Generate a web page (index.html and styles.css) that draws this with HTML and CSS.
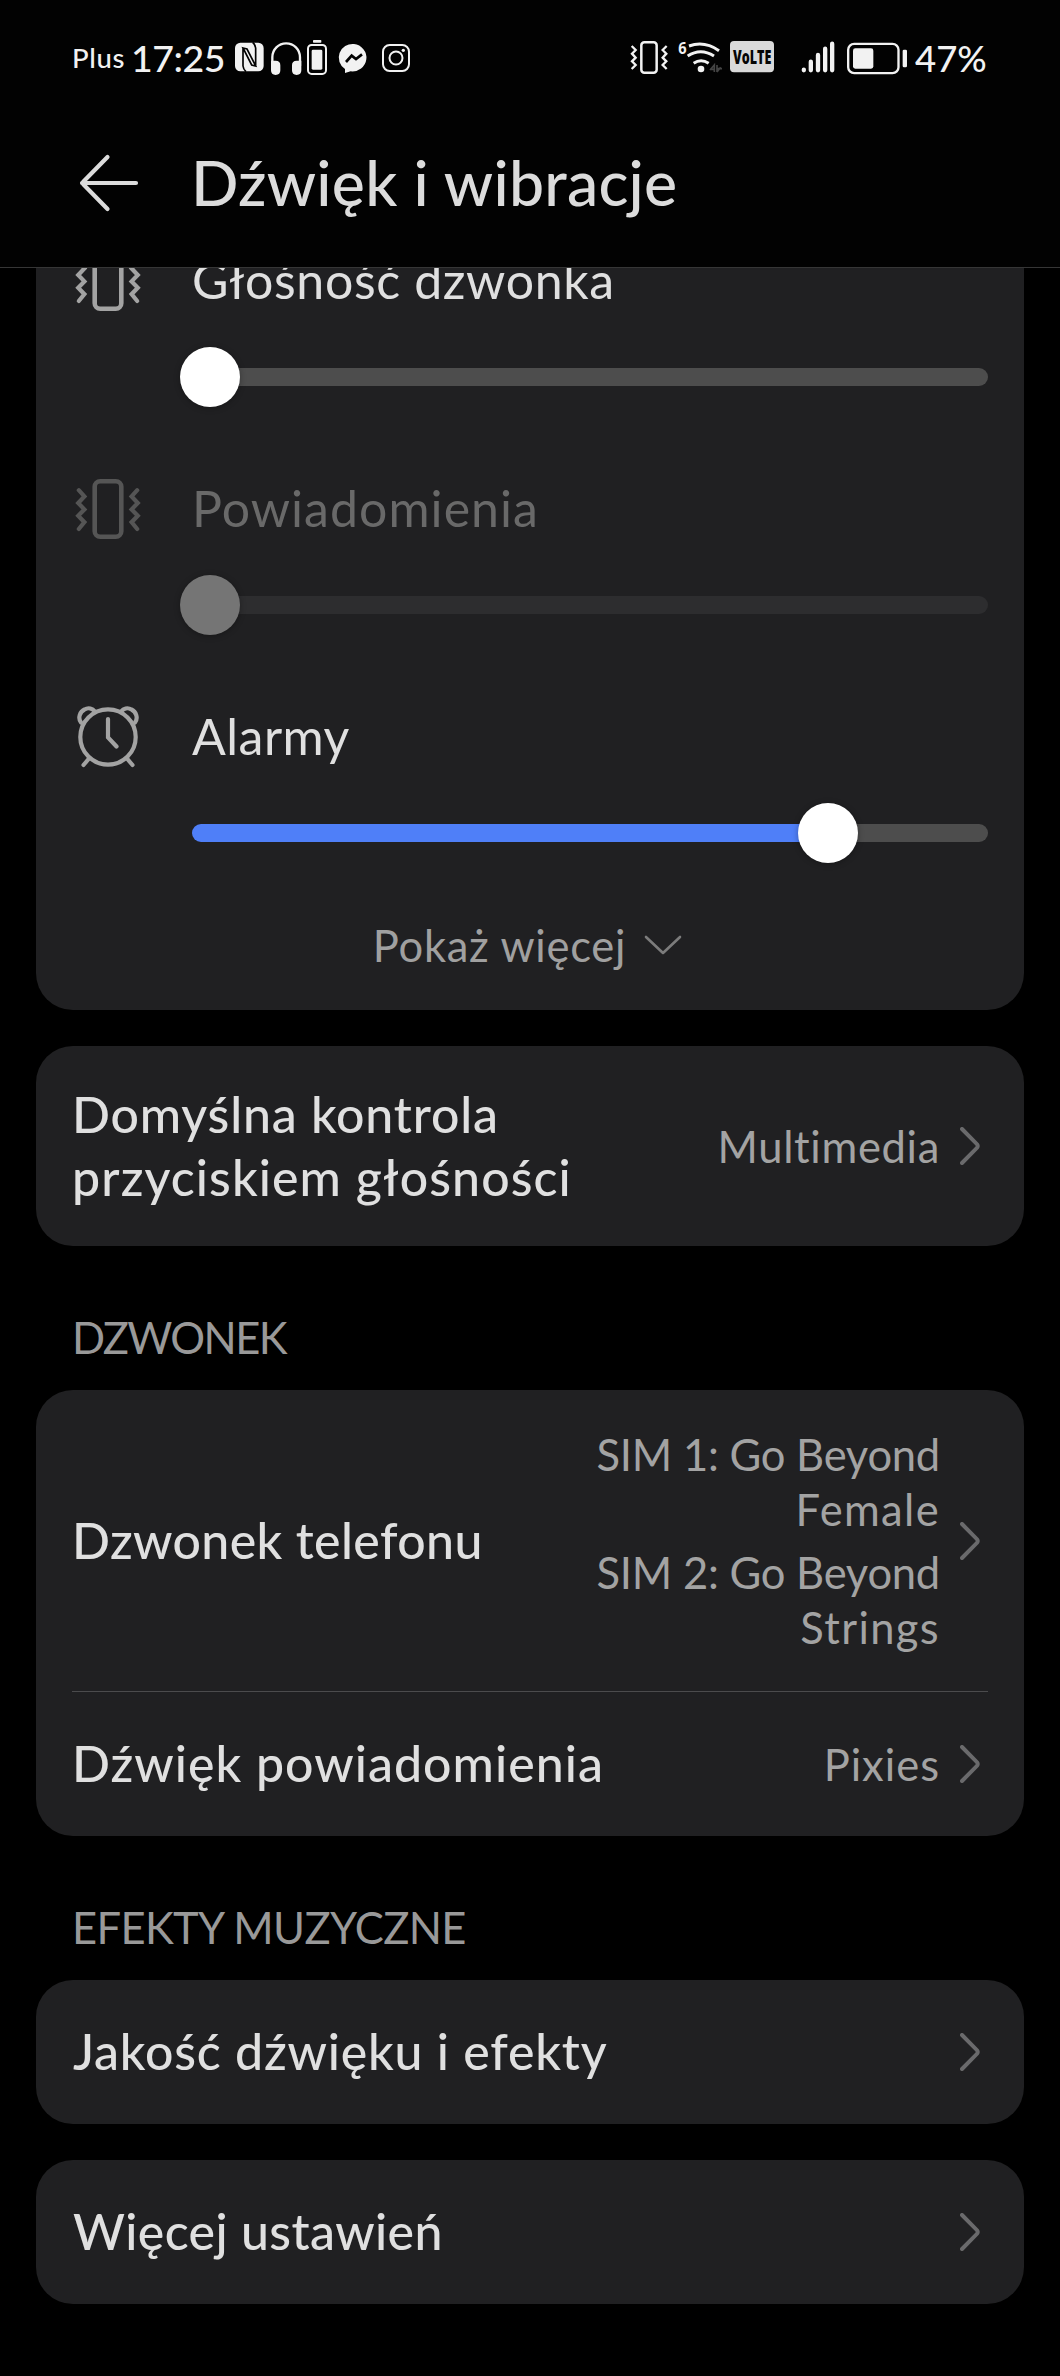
FILE: index.html
```
<!DOCTYPE html>
<html lang="pl">
<head>
<meta charset="utf-8">
<title>Dźwięk i wibracje</title>
<link rel="stylesheet" href="styles.css">
</head>
<body>
<svg width="0" height="0" class="defs">
  <defs>
    <symbol id="vibrate" viewBox="0 0 68 64">
      <g fill="none" stroke="currentColor" stroke-width="4.6" stroke-linecap="round" stroke-linejoin="round">
        <rect x="20.7" y="4.2" width="26.6" height="55.6" rx="5.5"/>
        <path stroke-linejoin="miter" stroke-width="4.2" d="M4.8 13.2 10.4 19.4 4.2 26 10.4 32.4 4.2 38.8 10.4 45.2 4.8 52M63.2 13.2 57.6 19.4 63.8 26 57.6 32.4 63.8 38.8 57.6 45.2 63.2 52"/>
      </g>
    </symbol>
    <symbol id="chevron" viewBox="0 0 20 38">
      <path d="M2 2 17 17.2Q18.4 19 17 20.8L2 36" fill="none" stroke="currentColor" stroke-width="4" stroke-linecap="round"/>
    </symbol>
  </defs>
</svg>

<header class="header">
  <div class="status">
    <span class="carrier">Plus</span>
    <span class="time">17:25</span>
    <svg class="st-nfc" viewBox="525 60 86 110">
      <rect x="525" y="68" width="86" height="86" rx="16" fill="currentColor"/>
      <path d="M549 84v54q1 10 9 17M587 138V84q-1-10-9-17M549 84l12 3 26 51-12-3z" fill="none" stroke="#020202" stroke-width="5"/>
    </svg>
    <svg class="st-phones" viewBox="632 60 91 110">
      <path d="M636 138v-26a41.500 42 0 0 1 83 0v26" fill="none" stroke="currentColor" stroke-width="7"/>
      <path fill="currentColor" d="M632 122h14q14 0 14 14v15q0 14-14 14t-14-14zM723 122h-14q-14 0-14 14v15q0 14 14 14t14-14z"/>
    </svg>
    <svg class="st-cell" viewBox="741 60 60 110">
      <rect x="759" y="60" width="25" height="8" rx="2" fill="currentColor"/>
      <rect x="744" y="75" width="54" height="87" rx="11" fill="none" stroke="currentColor" stroke-width="6"/>
      <rect x="755" y="89" width="32" height="60" rx="4" fill="currentColor"/>
    </svg>
    <svg class="st-msg" viewBox="840 60 85 110">
      <path fill="currentColor" d="M882 72a42 41 0 1 1-10 82l-17 5v-12a42 41 0 0 1 27-75z"/>
      <path d="M858 126l17-19 13 10 18-14" fill="none" stroke="#020202" stroke-width="8"/>
    </svg>
    <svg class="st-insta" viewBox="966 60 84 110">
      <g fill="none" stroke="currentColor" stroke-width="6">
        <rect x="969" y="75" width="78" height="78" rx="20"/>
        <circle cx="1008" cy="114" r="19.500"/>
      </g>
      <circle cx="1030" cy="91" r="5" fill="currentColor"/>
    </svg>

    <span class="spacer"></span>

    <svg class="st-vib" viewBox="60 60 116 110">
      <g fill="none" stroke="currentColor" stroke-width="7.500">
        <rect x="94" y="67" width="46" height="91" rx="9"/>
        <path stroke-width="7" d="M65 78l12 12-11 11 11 12-11 11 11 11-12 12M170 78l-12 12 11 11-11 12 11 11-11 11 12 12"/>
      </g>
    </svg>
    <svg class="st-wifi" viewBox="203 60 133 110">
      <text x="204" y="101" class="wifi-gen" textLength="25" lengthAdjust="spacingAndGlyphs">6</text>
      <g fill="none" stroke="currentColor" stroke-width="9">
        <path d="M236 78q46-17 90 14M232 108q39-26 79 0M250 130q22-15 45 0"/>
      </g>
      <circle cx="272" cy="147" r="10" fill="currentColor"/>
      <path d="M299 150l13-15v21M299 148h15M320 135v21M320 156l11-14M320 146h15" fill="none" stroke="#444" stroke-width="5"/>
    </svg>
    <svg class="st-volte" viewBox="360 60 132 110">
      <rect x="360" y="63" width="132" height="94" rx="12" fill="#d9d9d9"/>
      <text x="369" y="131" class="volte" textLength="115" lengthAdjust="spacingAndGlyphs">VoLTE</text>
    </svg>
    <svg class="st-signal" viewBox="573 60 101 110">
      <path d="M581.500 149v2M602.500 125v26M624 105v46M645.500 86v65M666.500 71v80" fill="none" stroke="currentColor" stroke-width="13" stroke-linecap="round"/>
    </svg>
    <svg class="st-batt" viewBox="711 60 180 110">
      <rect x="714.500" y="71.500" width="151" height="88" rx="18" fill="none" stroke="currentColor" stroke-width="7"/>
      <rect x="729" y="85" width="61" height="61" rx="7" fill="currentColor"/>
      <rect x="878" y="89" width="13" height="53" rx="4" fill="currentColor"/>
    </svg>
    <span class="percent">47%</span>
  </div>
  <div class="titlebar">
    <svg class="back" viewBox="0 0 60 60">
      <path d="M28.500 4 4.500 28.500Q3 30 4.500 31.500L28.500 56M3 30H57" fill="none" stroke="currentColor" stroke-width="4.200" stroke-linecap="round"/>
    </svg>
    <h1 class="title">Dźwięk i wibracje</h1>
  </div>
</header>

<main class="content">
  <section class="card volumes">
    <div class="volume">
      <svg class="vol-icon"><use href="#vibrate"/></svg>
      <span class="vol-label fit-ring">Głośność dzwonka</span>
      <div class="slider at-min"><div class="thumb"></div></div>
    </div>
    <div class="volume disabled">
      <svg class="vol-icon"><use href="#vibrate"/></svg>
      <span class="vol-label fit-notify">Powiadomienia</span>
      <div class="slider at-min"><div class="thumb"></div></div>
    </div>
    <div class="volume">
      <svg class="vol-icon" viewBox="0 0 68 64">
        <g fill="none" stroke="currentColor" stroke-width="4.200" stroke-linecap="round">
          <circle cx="34" cy="32" r="27.700"/>
          <path d="M34 14V32.500L42.500 41.500M15 53.500 9.500 60M53 53.500 58.500 60M7 17.500C3.500 13 6 6.500 10.500 4.500 14.500 2 18.500 3.500 21 6.500M61 17.500C64.500 13 62 6.500 57.500 4.500 53.500 2 49.500 3.500 47 6.500"/>
        </g>
      </svg>
      <span class="vol-label fit-alarm">Alarmy</span>
      <div class="slider at-80"><div class="thumb"></div></div>
    </div>
    <div class="more">
      <span class="more-label">Pokaż więcej</span>
      <svg class="more-chev" viewBox="0 0 38 20"><path d="M2 2 19 18 36 2" fill="none" stroke="currentColor" stroke-width="2.600" stroke-linecap="round" stroke-linejoin="round"/></svg>
    </div>
  </section>

  <section class="card">
    <div class="row tall">
      <span class="label pull"><span class="fit-control">Domyślna kontrola</span><br><span class="fit-button">przyciskiem głośności</span></span>
      <span class="value fit-media">Multimedia</span>
      <svg class="chev"><use href="#chevron"/></svg>
    </div>
  </section>

  <h2 class="section fit-dzwonek">DZWONEK</h2>
  <section class="card">
    <div class="row ringtones">
      <span class="label pull fit-phone">Dzwonek telefonu</span>
      <span class="value">
        <span class="sim"><span class="fit-sim">SIM 1: Go Beyond</span><br><span class="fit-name">Female</span></span>
        <span class="sim"><span class="fit-sim">SIM 2: Go Beyond</span><br><span class="fit-name">Strings</span></span>
      </span>
      <svg class="chev"><use href="#chevron"/></svg>
    </div>
    <div class="divider"></div>
    <div class="row">
      <span class="label pull fit-sound">Dźwięk powiadomienia</span>
      <span class="value fit-pixies">Pixies</span>
      <svg class="chev"><use href="#chevron"/></svg>
    </div>
  </section>

  <h2 class="section fit-efekty">EFEKTY MUZYCZNE</h2>
  <section class="card">
    <div class="row">
      <span class="label fit-control">Jakość dźwięku i efekty</span>
      <svg class="chev"><use href="#chevron"/></svg>
    </div>
  </section>
  <section class="card">
    <div class="row">
      <span class="label fit-more">Więcej ustawień</span>
      <svg class="chev"><use href="#chevron"/></svg>
    </div>
  </section>
</main>
</body>
</html>
```
FILE: styles.css
```
* { box-sizing: border-box; }

body {
  margin: 0;
  width: 1060px;
  height: 2376px;
  overflow: hidden;
  background: #000;
  color: #e0e0e0;
  font-family: Lato, "Noto Sans", sans-serif;
  white-space: nowrap;
}

svg { display: block; flex: none; }
.defs { position: absolute; }

/* Header */
.header {
  position: relative;
  z-index: 1;
  height: 268px;
  background: #020202;
  border-bottom: 1px solid #363636;
}

.status {
  display: flex;
  align-items: center;
  height: 115px;
  padding: 0 73px 0 72px;
  color: #f2f2f2;
}
.status svg { height: 36.67px; margin-top: 2px; overflow: visible; }
.carrier { width: 59px; font-size: 27.5px; font-weight: 500; letter-spacing: 0.7px; }
.time { width: 104px; font-size: 37.5px; font-weight: 500; letter-spacing: -0.5px; }
.st-nfc { width: 28.67px; }
.st-phones { width: 30.33px; margin-left: 7px; }
.st-cell { width: 20px; margin-left: 6px; }
.st-msg { width: 28.33px; margin-left: 13px; }
.st-insta { width: 28px; margin-left: 13.67px; }
.spacer { flex: 1; }
.st-vib { width: 38.67px; }
.st-wifi { width: 44.33px; margin-left: 9px; }
.st-volte { width: 44px; margin-left: 8px; }
.st-signal { width: 33.67px; margin-left: 27px; }
.st-batt { width: 60px; margin-left: 12.33px; }
.percent { width: 72px; margin-left: 8px; font-size: 36.5px; font-weight: 500; }
.wifi-gen { font: 700 50px/1 "Open Sans", sans-serif; fill: #f2f2f2; }
.volte { font: 800 58px/1 "Open Sans", sans-serif; fill: #060606; }

.titlebar {
  display: flex;
  align-items: center;
  height: 134px;
  padding-left: 79px;
}
.back { width: 60px; height: 60px; margin-top: 2px; color: #dcdcdc; }
.title {
  margin: -2px 0 0 52px;
  font-size: 62.5px;
  font-weight: 500;
  letter-spacing: 0.25px;
  color: #dcdcdc;
}

/* Cards */
.content {
  display: flex;
  flex-direction: column;
  margin-top: -37px;
  padding: 0 36px;
}
.card {
  margin-bottom: 36px;
  border-radius: 37px;
  background: #202022;
}

/* Volume sliders */
.volumes {
  height: 779px;
  border-radius: 0 0 37px 37px;
  padding: 0 36px;
}
.volume {
  display: grid;
  grid-template-columns: 120px 1fr;
  grid-template-rows: 100px 60px;
  row-gap: 16px;
  height: 228px;
  align-items: center;
}
.vol-icon { width: 68px; height: 64px; margin-left: 2px; color: #a3a3a3; }
.vol-label { font-size: 50px; padding-bottom: 3px; }
.slider {
  grid-column: 2;
  display: flex;
  align-items: center;
  height: 18px;
  border-radius: 9px;
  background: #4d4d4d;
}
.thumb {
  width: 60px;
  height: 60px;
  border-radius: 50%;
  background: #fff;
  box-shadow: 0 1px 6px rgba(0, 0, 0, 0.3);
}
.at-min .thumb { margin-left: -12px; }
.at-80 { background: linear-gradient(to right, #4f7ff8 636px, #4d4d4d 636px); }
.at-80 .thumb { margin-left: 606px; }
.disabled .vol-icon { color: #555; }
.disabled .vol-label { color: #696969; }
.disabled .slider { background: #2d2d2f; }
.disabled .thumb { background: #757575; }

.more {
  display: flex;
  align-items: center;
  justify-content: center;
  gap: 18px;
  height: 60px;
  padding-right: 5px;
  font-size: 43.5px;
  color: #a0a0a0;
}
.more-label { letter-spacing: 0.73px; }
.more-chev { width: 38px; height: 20px; color: #7c7c7c; }

/* Setting rows */
.row {
  display: flex;
  align-items: center;
  height: 144px;
  padding: 0 44px 0 37px;
}
.tall { height: 200px; }
.ringtones { height: 301px; }
.label {
  flex: 1;
  padding-bottom: 1px;
  font-size: 50px;
  font-weight: 500;
  line-height: 63px;
}
.pull { margin-left: -1px; }
.value {
  font-size: 43.5px;
  line-height: 55px;
  text-align: right;
  color: #a3a3a3;
}
.sim { display: block; }
.sim + .sim { margin-top: 8px; }
.chev { width: 20px; height: 38px; margin-left: 20px; color: #6a6a6c; }
.divider { height: 1px; margin: 0 36px; background: #4b4b4d; }

.section {
  height: 52px;
  margin: 29px 0 27px;
  padding-left: 36px;
  font-size: 43.5px;
  font-weight: 400;
  line-height: 52px;
  color: #999;
}

/* Tracking per label */
.fit-ring { letter-spacing: 0.65px; }
.fit-notify { letter-spacing: 1.04px; }
.fit-alarm { letter-spacing: 0.5px; }
.fit-control { letter-spacing: 0.82px; }
.fit-button { letter-spacing: 1.1px; }
.fit-media { letter-spacing: 0.67px; }
.fit-dzwonek { letter-spacing: -1.6px; }
.fit-efekty { letter-spacing: -0.65px; }
.fit-phone { letter-spacing: 0.4px; }
.fit-sim { letter-spacing: -0.23px; }
.fit-name { letter-spacing: 1.35px; }
.fit-sound { letter-spacing: 1.04px; }
.fit-pixies { letter-spacing: 1px; }
.fit-more { letter-spacing: 0.4px; }
```
